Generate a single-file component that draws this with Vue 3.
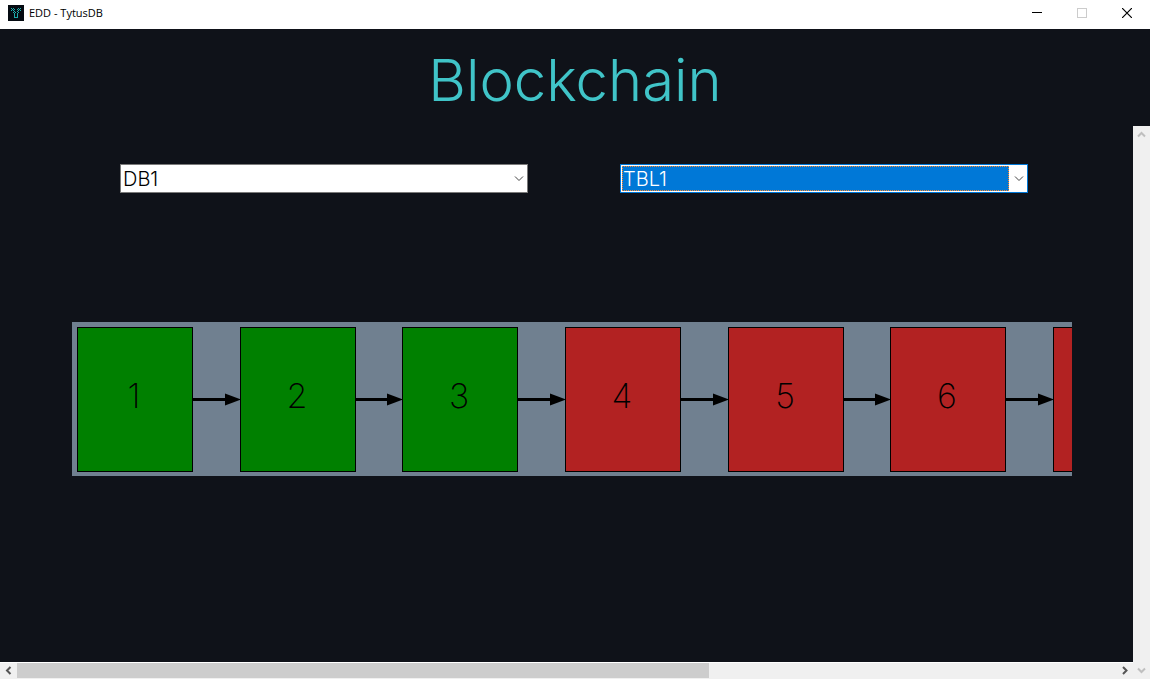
<script setup>
import { ref } from 'vue'

const database = ref('DB1')
const table = ref('TBL1')

const pitch = 488 / 3
const blocks = [1, 2, 3, 4, 5, 6, 7].map((n, i) => ({
  n,
  x: 5 + Math.round(i * pitch),
  valid: n <= 3,
  label: n <= 6
}))
const links = blocks.slice(1).map((b, i) => ({ from: blocks[i].x + 115, to: b.x }))

const pixels = [
  [3, 3], [5, 3], [10, 3], [12, 3], [4, 4], [6, 4], [9, 4], [11, 4],
  [3, 5], [5, 5], [10, 5], [12, 5], [6, 6], [9, 6], [5, 7], [10, 7], [7, 7]
]
</script>

<template>
  <div class="window">
    <header class="titlebar">
      <svg class="logo" width="16" height="16" viewBox="0 0 16 16" aria-hidden="true">
        <rect width="16" height="16" fill="#050b12" />
        <rect v-for="p in pixels" :key="p.join()" :x="p[0]" :y="p[1]" width="1" height="1" fill="#1fb5b5" />
        <path d="M6.500 8v4M9.500 8v4M6 12.500h4" stroke="#1ca8a8" fill="none" />
      </svg>
      <span class="caption">EDD - TytusDB</span>
      <div class="controls">
        <button type="button" aria-label="Minimize">
          <svg width="10" height="10"><path d="M0 4.500h10" stroke="#000" /></svg>
        </button>
        <button type="button" aria-label="Maximize" disabled>
          <svg width="10" height="10"><rect x=".5" y=".5" width="9" height="9" fill="none" stroke="#ccc" /></svg>
        </button>
        <button type="button" aria-label="Close">
          <svg width="10" height="10"><path d="M0 0l10 10M10 0L0 10" stroke="#000" stroke-width="1.200" /></svg>
        </button>
      </div>
    </header>

    <h1>Blockchain</h1>

    <div class="pane">
      <main>
        <div class="pickers">
          <div class="combo">
            <select v-model="database" aria-label="Database">
              <option>DB1</option>
            </select>
            <svg class="chevron" width="17" height="9" viewBox="0 0 17 9"><path d="M6 2.500l4 4 4-4" /></svg>
          </div>
          <div class="combo active">
            <select v-model="table" aria-label="Table">
              <option>TBL1</option>
            </select>
            <svg class="chevron" width="17" height="9" viewBox="0 0 17 9"><path d="M6 2.500l4 4 4-4" /></svg>
          </div>
        </div>

        <div class="chain">
          <svg width="1102" height="154" role="img" aria-label="Chain of blocks">
            <g v-for="b in blocks" :key="b.n">
              <rect :x="b.x" y="5" width="116" height="145" fill="#000" />
              <rect :x="b.x + 1" y="6" width="114" height="143" :class="b.valid ? 'valid' : 'broken'" />
              <text v-if="b.label" :x="b.x + 57" y="86">{{ b.n }}</text>
            </g>
            <g v-for="l in links" :key="l.from">
              <rect :x="l.from" y="76" :width="l.to - l.from - 10" height="3" />
              <path :d="`M${l.to - 15} 71.500L${l.to + 1} 77.500L${l.to - 15} 83.500z`" />
            </g>
          </svg>
        </div>
      </main>

      <div class="vbar">
        <button type="button" aria-label="Scroll up">
          <svg width="9" height="9"><path d="M1 6.500L4.500 3 8 6.500" stroke="#bfbfbf" /></svg>
        </button>
        <button type="button" aria-label="Scroll down">
          <svg width="9" height="9"><path d="M1 2.500L4.500 6 8 2.500" stroke="#bfbfbf" /></svg>
        </button>
      </div>

      <div class="hbar">
        <button type="button" aria-label="Scroll left">
          <svg width="9" height="9"><path d="M6.500 1L3 4.500 6.500 8" stroke="#555" /></svg>
        </button>
        <div class="track"><div class="thumb"></div></div>
        <button type="button" aria-label="Scroll right">
          <svg width="9" height="9"><path d="M3 1L6.500 4.500 3 8" stroke="#555" /></svg>
        </button>
      </div>
    </div>
  </div>
</template>

<style>
body {
  margin: 0;
  background: #0f1219;
}
</style>

<style scoped>
.window {
  display: flex;
  flex-direction: column;
  min-height: 100vh;
  background: #0f1219;
  font-family: Inter, "Open Sans", sans-serif;
}

button {
  display: flex;
  align-items: center;
  justify-content: center;
  padding: 0;
  border: 0;
  background: none;
}

.titlebar {
  display: flex;
  align-items: center;
  height: 29px;
  padding: 0 1px 3px 8px;
  box-sizing: border-box;
  background: #fff;
}

.caption {
  margin-left: 5px;
  font: 11px/16px "Open Sans", "Noto Sans", sans-serif;
  color: #000;
}

.controls {
  display: flex;
  margin-left: auto;
}

.controls button {
  width: 45px;
  height: 26px;
}

h1 {
  margin: 0;
  height: 97px;
  font-size: 58px;
  font-weight: 300;
  line-height: 102px;
  text-align: center;
  color: #40c4c8;
}

.pane {
  flex: 1;
  display: grid;
  grid-template-columns: 1fr 17px;
  grid-template-rows: 1fr 17px;
}

main {
  min-width: 0;
  padding: 38px 61px 38px 72px;
}

.pickers {
  display: grid;
  grid-template-columns: 1fr 1fr;
  gap: 92px;
  padding: 0 44px 0 48px;
}

.combo {
  display: flex;
  align-items: center;
  height: 29px;
  padding: 1px;
  box-sizing: border-box;
  border: 1px solid #7a7a7a;
  background: #fff;
}

select {
  flex: 1;
  min-width: 0;
  height: 25px;
  padding: 0 1px;
  border: 0;
  border-radius: 0;
  outline: 0;
  appearance: none;
  background: #fff;
  color: #000;
  font: 300 20px/24px Inter, "Open Sans", sans-serif;
}

.active {
  border-color: #0078d7;
}

.active select {
  padding: 0;
  border: 1px dotted #ff8728;
  background: #0078d7;
  color: #fff;
}

.chevron {
  flex: none;
  fill: none;
  stroke: #444;
  pointer-events: none;
}

.chain {
  margin-top: 129px;
  overflow: hidden;
  background: #708090;
}

.chain svg {
  display: block;
}

.chain text {
  font-size: 34px;
  font-weight: 200;
  text-anchor: middle;
}

.valid {
  fill: #008000;
}

.broken {
  fill: #b22222;
}

.vbar {
  grid-row: 1 / 3;
  grid-column: 2;
  display: flex;
  flex-direction: column;
  justify-content: space-between;
  background: #f0f0f0;
}

.hbar {
  display: flex;
  box-sizing: border-box;
  border-top: 1px solid #fff;
  background: #f0f0f0;
}

.vbar button,
.hbar button {
  width: 17px;
  height: 17px;
}

.hbar button {
  height: 15px;
}

.vbar path,
.hbar path {
  fill: none;
  stroke-width: 2;
}

.track {
  flex: 1;
}

.thumb {
  width: 63%;
  height: 15px;
  background: #cdcdcd;
}
</style>
